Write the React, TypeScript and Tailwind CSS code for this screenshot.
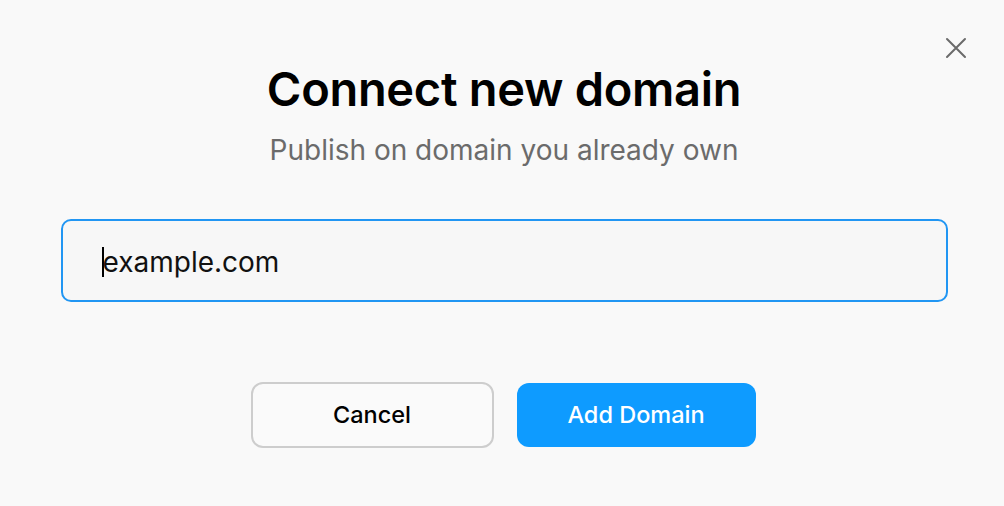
import React from "react";

export default function App() {
  return (
    <div
      className="w-[1004px] h-[506px] bg-[#f9f9f9] flex flex-col items-center relative pl-[4px]"
      style={{ fontFamily: "Inter, 'Noto Sans', sans-serif" }}
    >
      <button className="absolute left-[945px] top-[37px] w-[22px] h-[22px]">
        <svg width="22" height="22" viewBox="0 0 22 22" fill="none" stroke="#6b6b6b" strokeWidth="2" strokeLinecap="round">
          <path d="M2 2 L20 20 M20 2 L2 20" />
        </svg>
      </button>
      <h1 className="mt-[59px] text-[47px] leading-[60px] font-semibold text-black tracking-[-0.3px]">
        Connect new domain
      </h1>
      <p className="mt-[14px] text-[28px] leading-[34px] text-[#6b6b6b]">Publish on domain you already own</p>
      <div className="mt-[52px] w-[887px] h-[83px] rounded-[10px] border-2 border-[#2196f3] bg-[#f7f7f7] flex items-center pl-[39px] pt-[3px]">
        <span className="w-[2px] h-[30px] bg-black"></span>
        <span className="text-[28px] text-[#111] -ml-[1px]">example.com</span>
      </div>
      <div className="mt-[80px] flex gap-[23px] -ml-[2px]">
        <button className="w-[243px] h-[66px] rounded-[12px] border-2 border-[#cdcdcd] bg-[#fafafa] text-[23.5px] font-medium text-black">
          Cancel
        </button>
        <button className="w-[239px] h-[64px] mt-[1px] rounded-[12px] bg-[#0e9bff] text-[23.5px] font-medium text-white">
          Add Domain
        </button>
      </div>
    </div>
  );
}
